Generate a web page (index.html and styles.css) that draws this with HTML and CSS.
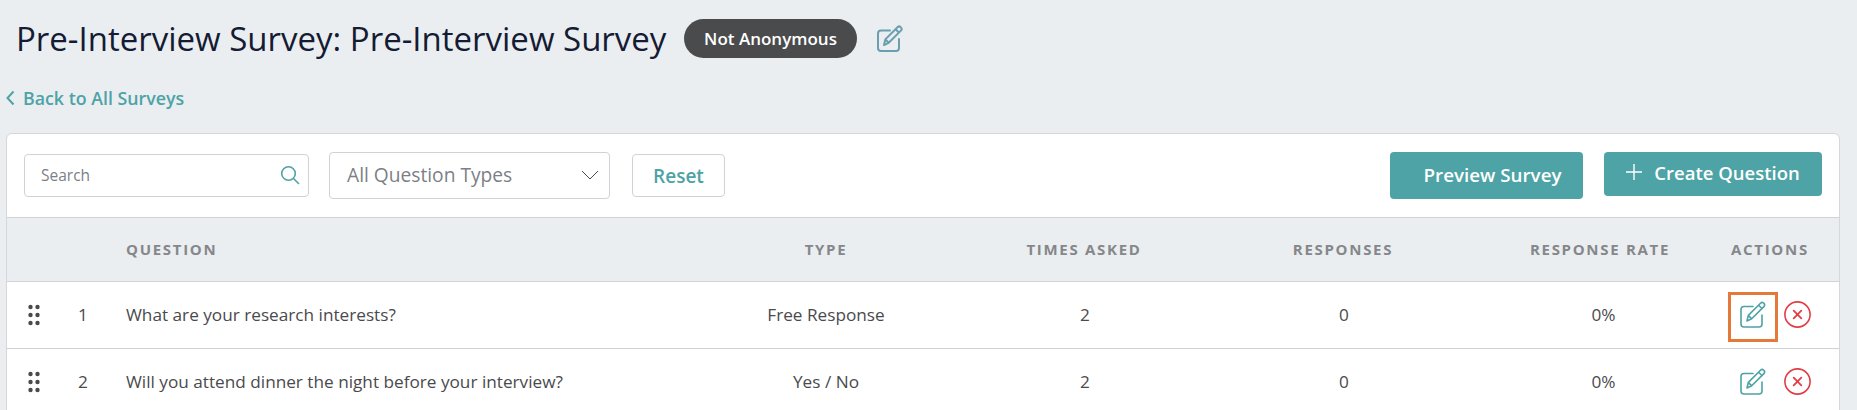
FILE: index.html
```html
<!DOCTYPE html>
<html>
<head>
    <meta charset="UTF-8">
    <link rel="stylesheet" href="styles.css">
</head>
<body>
<svg class="defs" width="0" height="0">
    <symbol id="edit" viewBox="0 0 26 27">
        <path class="ico" d="M13 5.5H4a3 3 0 0 0-3 3V23a3 3 0 0 0 3 3h15a3 3 0 0 0 3-3V14" fill="none" stroke="currentColor" stroke-linecap="round"/>
        <path class="ico" d="M7 20l1.3-5.6L20.5 2.2a2.3 2.3 0 0 1 3.2 0l.2.2a2.3 2.3 0 0 1 0 3.2L11.7 17.8zM18.6 4.2l3.3 3.3M8.4 14.6l3.2 3" fill="none" stroke="currentColor" stroke-linejoin="round"/>
    </symbol>
    <symbol id="remove" viewBox="0 0 27 27">
        <circle cx="13.5" cy="13.5" r="12.6" fill="none" stroke="currentColor" stroke-width="1.6"/>
        <path d="M9.7 9.7l7.6 7.6M17.3 9.7l-7.6 7.6" fill="none" stroke="currentColor" stroke-width="1.8" stroke-linecap="round"/>
    </symbol>
    <symbol id="dots" viewBox="0 0 12 22">
        <circle cx="2.5" cy="3" r="2.2"/><circle cx="9.5" cy="3" r="2.2"/>
        <circle cx="2.5" cy="11" r="2.2"/><circle cx="9.5" cy="11" r="2.2"/>
        <circle cx="2.5" cy="19" r="2.2"/><circle cx="9.5" cy="19" r="2.2"/>
    </symbol>
</svg>

<div class="title-row">
    <h1 class="title">Pre-Interview Survey: Pre-Interview Survey</h1>
    <span class="pill">Not Anonymous</span>
    <svg class="title-edit"><use href="#edit"/></svg>
</div>

<a class="back">
    <svg class="back-icon" viewBox="0 0 9 16"><path d="M7.5 1.5L1.5 8l6 6.5" fill="none" stroke="currentColor" stroke-width="2"/></svg>
    Back to All Surveys
</a>

<div class="card">
    <div class="toolbar">
        <div class="search">
            <span>Search</span>
            <svg class="search-icon" viewBox="0 0 20 20"><circle cx="8.5" cy="8.5" r="6.8" fill="none" stroke="currentColor" stroke-width="1.6"/><path d="M13.5 13.5l5.5 5.5" stroke="currentColor" stroke-width="1.6"/></svg>
        </div>
        <div class="select">
            <span>All Question Types</span>
            <svg class="select-icon" viewBox="0 0 18 10"><path d="M1 1l8 8 8-8" fill="none" stroke="currentColor" stroke-width="1"/></svg>
        </div>
        <div class="reset">Reset</div>
        <div class="spacer"></div>
        <div class="btn preview">Preview Survey</div>
        <div class="btn create">
            <svg class="plus" viewBox="0 0 16 16"><path d="M8 0v16M0 8h16" stroke="currentColor" stroke-width="1.4"/></svg>
            Create Question
        </div>
    </div>

    <table class="questions">
        <colgroup>
            <col class="c-handle"><col class="c-num"><col class="c-question"><col class="c-type"><col class="c-times"><col class="c-resp"><col class="c-rate"><col class="c-actions">
        </colgroup>
        <thead>
            <tr>
                <th></th>
                <th></th>
                <th class="left">QUESTION</th>
                <th>TYPE</th>
                <th>TIMES ASKED</th>
                <th>RESPONSES</th>
                <th>RESPONSE RATE</th>
                <th class="actions-head">ACTIONS</th>
            </tr>
        </thead>
        <tbody>
            <tr>
                <td class="handle"><svg class="dots"><use href="#dots"/></svg></td>
                <td>1</td>
                <td class="left">What are your research interests?</td>
                <td>Free Response</td>
                <td class="count">2</td>
                <td class="count">0</td>
                <td class="rate">0%</td>
                <td class="action-cell">
                    <div class="actions">
                        <span class="edit-btn focused"><svg class="edit-icon"><use href="#edit"/></svg></span>
                        <svg class="remove-icon"><use href="#remove"/></svg>
                    </div>
                </td>
            </tr>
            <tr>
                <td class="handle"><svg class="dots"><use href="#dots"/></svg></td>
                <td>2</td>
                <td class="left">Will you attend dinner the night before your interview?</td>
                <td>Yes / No</td>
                <td class="count">2</td>
                <td class="count">0</td>
                <td class="rate">0%</td>
                <td class="action-cell">
                    <div class="actions">
                        <span class="edit-btn"><svg class="edit-icon"><use href="#edit"/></svg></span>
                        <svg class="remove-icon"><use href="#remove"/></svg>
                    </div>
                </td>
            </tr>
        </tbody>
    </table>
</div>
</body>
</html>
```

FILE: styles.css
```css
html,body{margin: 0;padding: 0;height: 410px;overflow: hidden;}
body{background: #ebeef1;font-family: "Open Sans","Lato","Liberation Sans",sans-serif;color: #4a4a4d;font-size: 16px;}
.defs{display: block;}
.ico{stroke-width: var(--ico-w, 1.6);}

.title-row{display: flex;align-items: center;height: 39px;padding: 19px 0 0 16px;}
.title{margin: 0;font-size: 33px;font-weight: 400;color: #141b33;line-height: 37px;width: 668px;white-space: nowrap;}
.pill{display: flex;align-items: center;justify-content: center;width: 173px;height: 39px;border-radius: 20px;background: #4a4b4d;color: #fff;font-size: 17px;font-weight: 600;}
.title-edit{--ico-w: 2;width: 26px;height: 27px;margin: 0 0 0 20px;color: #6a9fb0;}

.back{display: flex;align-items: center;gap: 8px;height: 20px;margin: 30px 0 0 6px;color: #4da3a5;font-size: 17.8px;font-weight: 600;}
.back-icon{width: 9px;height: 16px;}

.card{margin: 25px 17px 0 6px;background: #fff;border: 1px solid #d5d7da;border-radius: 6px 6px 0 0;}
.toolbar{display: flex;align-items: flex-start;height: 83px;padding: 18px 17px 0 17px;box-sizing: border-box;}
.search,.select,.reset{box-sizing: border-box;background: #fff;border: 1px solid #cfd2d8;border-radius: 4px;display: flex;align-items: center;}
.search{width: 285px;height: 43px;margin-top: 2px;padding: 0 8px 2px 16px;justify-content: space-between;color: #7b7f86;font-size: 15.5px;}
.search-icon{width: 20px;height: 20px;color: #4da3a5;}
.select{width: 281px;height: 47px;margin-left: 20px;padding: 0 8px 2px 17px;justify-content: space-between;color: #7b7f86;font-size: 19.2px;}
.select-icon{width: 18px;height: 10px;color: #4a4a4d;margin-right: 2px;}
.reset{width: 93px;height: 43px;margin: 2px 0 0 22px;justify-content: center;color: #4da3a5;font-size: 19px;font-weight: 600;}
.spacer{flex: 1;}
.btn{display: flex;align-items: center;justify-content: center;background: #4da3a5;color: #fff;border-radius: 4px;font-weight: 600;font-size: 18.8px;padding-bottom: 2px;box-sizing: border-box;}
.preview{width: 193px;height: 47px;padding-left: 12px;}
.create{width: 218px;height: 44px;margin-left: 21px;gap: 12px;font-size: 18.5px;padding-bottom: 4px;}
.plus{width: 16px;height: 16px;}

.questions{width: 100%;border-collapse: collapse;table-layout: fixed;}
.c-handle{width: 51px;}.c-num{width: 50px;}.c-question{width: 582px;}.c-type{width: 272px;}
.c-times{width: 244px;}.c-resp{width: 274px;}.c-rate{width: 240px;}
th,td{text-align: center;padding: 0;}
.left{text-align: left;padding-left: 18px;}
th{background: #ebeef1;height: 64px;padding-bottom: 1px;box-sizing: border-box;border-top: 1px solid #cfd2d6;border-bottom: 1px solid #cfd2d6;color: #85878a;font-size: 15px;font-weight: 700;letter-spacing: 1.7px;}
td{height: 66px;border-bottom: 1px solid #cfd2d6;font-size: 17.2px;color: #4a4a4d;}
td:not(.handle){padding-bottom: 2px;box-sizing: border-box;}
td.count{padding-left: 2px;}
td.rate{padding-left: 7px;}
td.action-cell{padding-bottom: 0;vertical-align: top;}
.actions-head{text-align: left;padding-left: 11px;}
.handle{text-align: left;padding-left: 21px;}
.dots{display: block;width: 12px;height: 22px;fill: #4a4a4d;}
.actions{display: flex;align-items: flex-start;padding-left: 8px;}
.edit-btn{box-sizing: border-box;display: flex;align-items: center;justify-content: center;width: 50px;height: 50px;margin-top: 10px;padding-bottom: 5px;border: 3px solid transparent;}
.edit-btn.focused{border-color: #e4793a;}
.edit-icon{width: 26px;height: 27px;color: #4da3a5;}
.remove-icon{width: 27px;height: 27px;margin: 19px 0 0 6px;color: #e23d44;}
```
